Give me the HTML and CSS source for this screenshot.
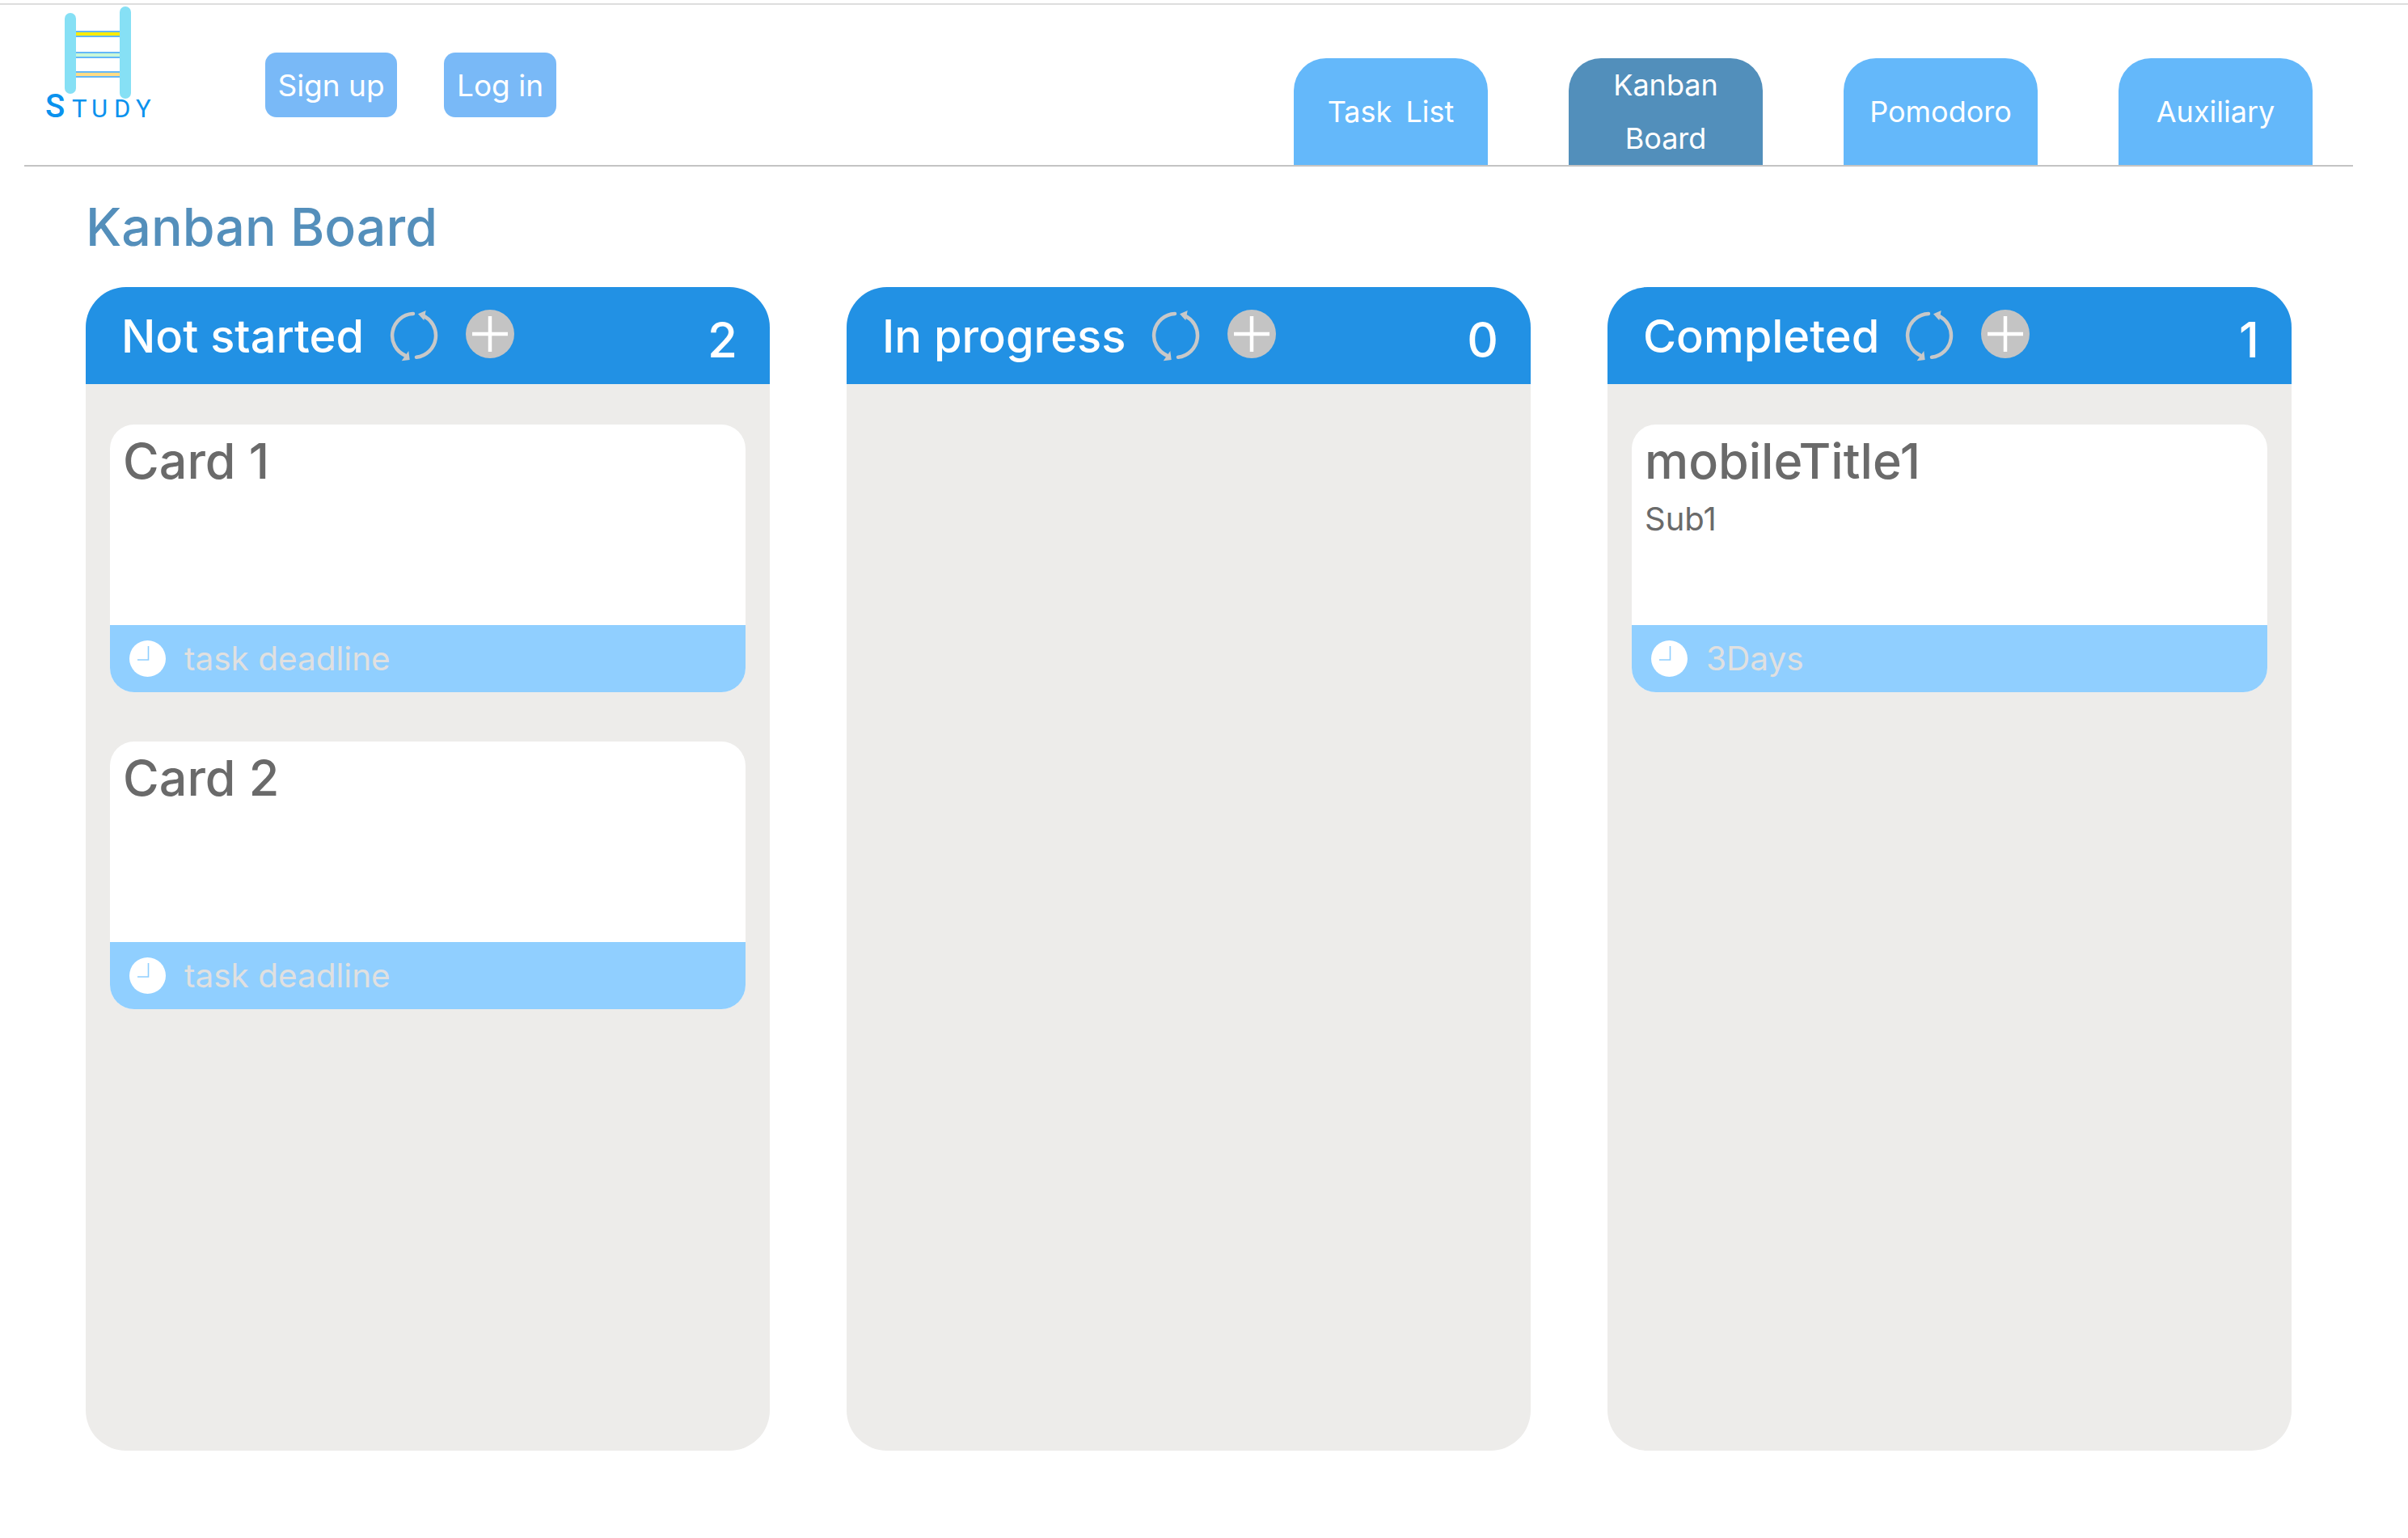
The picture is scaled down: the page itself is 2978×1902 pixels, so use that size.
FILE: index.html
```html
<!DOCTYPE html>
<html lang="en">
<head>
  <meta charset="UTF-8" />
  <title>Kanban Board</title>
  <link rel="stylesheet" href="styles.css">
</head>
<body>
  <div class="top-line"></div>

  <header class="site-header">
    <div class="logo">
      <svg class="logo-ladder" width="82" height="114" viewBox="80 8 82 114">
        <rect x="94" y="38" width="54" height="8" fill="#64b8f8"/>
        <rect x="94" y="40" width="54" height="4" fill="#ffec00"/>
        <rect x="94" y="64" width="54" height="8" fill="#64b8f8"/>
        <rect x="94" y="66" width="54" height="4" fill="#c8f7d8"/>
        <rect x="94" y="88" width="54" height="8" fill="#64b8f8"/>
        <rect x="94" y="90" width="54" height="4" fill="#ffdc85"/>
        <rect x="80" y="16" width="14" height="100" rx="7" fill="#86e0f5"/>
        <rect x="148" y="8" width="14" height="114" rx="7" fill="#86e0f5"/>
      </svg>
      <div class="logo-text"><span class="logo-s">S</span><span>T</span><span>U</span><span>D</span><span>Y</span></div>
    </div>

    <div class="auth">
      <button class="auth-btn signup">Sign up</button>
      <button class="auth-btn login">Log in</button>
    </div>

    <nav class="tabs">
      <a class="tab">Task List</a>
      <a class="tab active">Kanban Board</a>
      <a class="tab">Pomodoro</a>
      <a class="tab">Auxiliary</a>
    </nav>
  </header>

  <h1 class="page-title">Kanban Board</h1>

  <main class="board">
    <section class="column">
      <div class="column-head">
        <span class="column-name">Not started</span>
        <svg class="icon-refresh" width="60" height="63" viewBox="0 0 60 63"><path d="M29 4A27 27 0 0 0 19 55.6M33 57.8A27 27 0 0 0 40.5 6.1" fill="none" stroke="#c8c8c8" stroke-width="4.5" stroke-linecap="round"/><path d="M23.3 50L24.7 61L14.7 62.3ZM44.7 0L35 4.3L42.3 12.3Z" fill="#c8c8c8"/></svg>
        <svg class="icon-plus" width="60" height="60" viewBox="0 0 60 60"><circle cx="30" cy="30" r="30" fill="#c4c4c4"/><path d="M8 30H52M30 8V52" stroke="#fff" stroke-width="4.5"/></svg>
        <span class="column-count">2</span>
      </div>
      <div class="card-list">
        <article class="card">
          <div class="card-body"><div class="card-title">Card 1</div></div>
          <div class="card-foot">
            <svg class="icon-clock" width="45" height="45" viewBox="0 0 45 45"><circle cx="22.5" cy="22.5" r="22.5" fill="#fff"/><path d="M23.5 7V24H10" fill="none" stroke="#90cfff" stroke-width="1.6"/></svg>
            <span>task deadline</span>
          </div>
        </article>
        <article class="card">
          <div class="card-body"><div class="card-title">Card 2</div></div>
          <div class="card-foot">
            <svg class="icon-clock" width="45" height="45" viewBox="0 0 45 45"><circle cx="22.5" cy="22.5" r="22.5" fill="#fff"/><path d="M23.5 7V24H10" fill="none" stroke="#90cfff" stroke-width="1.6"/></svg>
            <span>task deadline</span>
          </div>
        </article>
      </div>
    </section>

    <section class="column">
      <div class="column-head">
        <span class="column-name">In progress</span>
        <svg class="icon-refresh" width="60" height="63" viewBox="0 0 60 63"><path d="M29 4A27 27 0 0 0 19 55.6M33 57.8A27 27 0 0 0 40.5 6.1" fill="none" stroke="#c8c8c8" stroke-width="4.5" stroke-linecap="round"/><path d="M23.3 50L24.7 61L14.7 62.3ZM44.7 0L35 4.3L42.3 12.3Z" fill="#c8c8c8"/></svg>
        <svg class="icon-plus" width="60" height="60" viewBox="0 0 60 60"><circle cx="30" cy="30" r="30" fill="#c4c4c4"/><path d="M8 30H52M30 8V52" stroke="#fff" stroke-width="4.5"/></svg>
        <span class="column-count">0</span>
      </div>
      <div class="card-list"></div>
    </section>

    <section class="column">
      <div class="column-head">
        <span class="column-name">Completed</span>
        <svg class="icon-refresh" width="60" height="63" viewBox="0 0 60 63"><path d="M29 4A27 27 0 0 0 19 55.6M33 57.8A27 27 0 0 0 40.5 6.1" fill="none" stroke="#c8c8c8" stroke-width="4.5" stroke-linecap="round"/><path d="M23.3 50L24.7 61L14.7 62.3ZM44.7 0L35 4.3L42.3 12.3Z" fill="#c8c8c8"/></svg>
        <svg class="icon-plus" width="60" height="60" viewBox="0 0 60 60"><circle cx="30" cy="30" r="30" fill="#c4c4c4"/><path d="M8 30H52M30 8V52" stroke="#fff" stroke-width="4.5"/></svg>
        <span class="column-count">1</span>
      </div>
      <div class="card-list">
        <article class="card">
          <div class="card-body">
            <div class="card-title">mobileTitle1</div>
            <div class="card-sub">Sub1</div>
          </div>
          <div class="card-foot">
            <svg class="icon-clock" width="45" height="45" viewBox="0 0 45 45"><circle cx="22.5" cy="22.5" r="22.5" fill="#fff"/><path d="M23.5 7V24H10" fill="none" stroke="#90cfff" stroke-width="1.6"/></svg>
            <span>3Days</span>
          </div>
        </article>
      </div>
    </section>
  </main>
</body>
</html>
```

FILE: styles.css
```css
* {
  box-sizing: border-box;
}

body {
  margin: 0;
  padding-top: 4px;
  font-family: Inter, "Liberation Sans", sans-serif;
  background-color: #fff;
}

.top-line {
  height: 2px;
  background: #ddd;
}

.site-header {
  display: flex;
  align-items: flex-start;
  height: 200px;
  margin: 0 68px 0 30px;
  padding-right: 50px;
  border-bottom: 2px solid #c4c4c4;
}

.logo {
  flex: none;
  width: 130px;
  margin-left: 26px;
  padding-top: 2px;
}

.logo-ladder {
  display: block;
  margin-left: 24px;
}

.logo-text {
  display: grid;
  grid-template-columns: 33px 24px 28px 27px 16px;
  align-items: baseline;
  margin-top: -7px;
  color: #0a92ee;
  font-family: "Liberation Sans Narrow", Roboto, sans-serif;
  font-size: 31px;
  line-height: 34px;
}

.logo-s {
  font-family: Roboto, sans-serif;
  font-size: 40px;
  font-weight: 500;
}

.auth {
  display: flex;
  gap: 58px;
  margin-left: 142px;
  margin-top: 59px;
}

.auth-btn {
  height: 80px;
  padding: 0;
  border: none;
  border-radius: 14px;
  background: #79b9f7;
  color: #fff;
  font-family: inherit;
  font-size: 37px;
}

.signup {
  width: 163px;
}

.login {
  width: 139px;
}

.tabs {
  display: flex;
  gap: 100px;
  margin-left: auto;
  margin-top: 66px;
}

.tab {
  display: flex;
  align-items: center;
  justify-content: center;
  width: 240px;
  height: 132px;
  padding: 0 30px;
  border-radius: 40px 40px 0 0;
  background: #64b8fa;
  color: #fff;
  font-size: 36px;
  line-height: 66px;
  text-align: center;
  word-spacing: 7px;
}

.tab.active {
  background: #528fbb;
}

.page-title {
  height: 105px;
  margin: 44px 0 0 106px;
  color: #548fbb;
  font-size: 64.5px;
  font-weight: 500;
  line-height: 62px;
}

.board {
  display: flex;
  gap: 95px;
  padding-left: 106px;
}

.column {
  display: flex;
  flex-direction: column;
  width: 846px;
  height: 1439px;
  border-radius: 50px;
  background: #edecea;
  overflow: hidden;
}

.column-head {
  display: flex;
  align-items: flex-start;
  flex: none;
  height: 120px;
  padding: 28px 40px 0 44px;
  background: #2291e4;
  color: #fff;
}

.column-name {
  margin-top: -1px;
  font-size: 56px;
  font-weight: 500;
  line-height: 68px;
}

.icon-refresh {
  flex: none;
  margin-top: 1px;
  margin-left: 32px;
}

.icon-plus {
  flex: none;
  margin-left: 34px;
}

.column-count {
  margin-left: auto;
  margin-top: 3px;
  font-size: 60px;
  font-weight: 500;
  line-height: 68px;
}

.card-list {
  display: flex;
  flex-direction: column;
  gap: 61px;
  padding: 50px 30px;
}

.card {
  height: 331px;
  border-radius: 30px;
  background: #fff;
  overflow: hidden;
}

.card-body {
  height: 248px;
  padding: 10px 16px;
  color: #6a6a6a;
}

.card-title {
  font-size: 61px;
  font-weight: 500;
  line-height: 70px;
}

.card-sub {
  margin-top: 12px;
  font-size: 40px;
  line-height: 50px;
}

.card-foot {
  display: flex;
  align-items: center;
  gap: 23px;
  height: 83px;
  padding-left: 24px;
  background: #90cfff;
  color: #e0e0e0;
  font-size: 40.5px;
}

.icon-clock {
  flex: none;
}
```
